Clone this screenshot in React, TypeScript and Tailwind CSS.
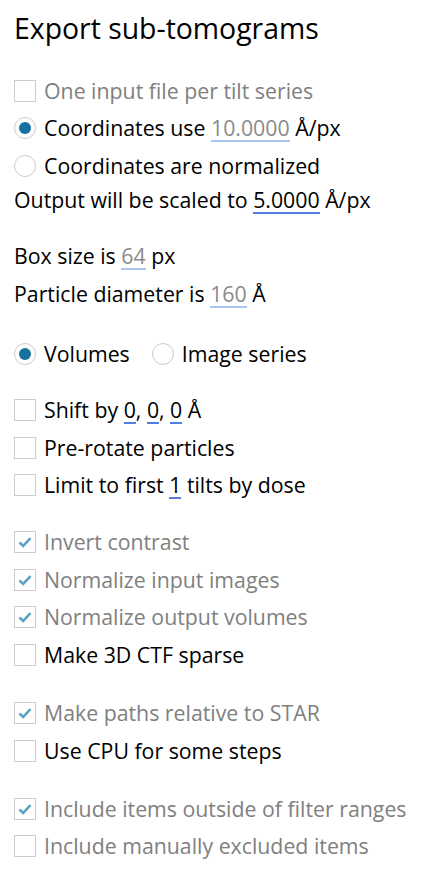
import React from "react";

function Box({ checked = false }: { checked?: boolean }) {
  return (
    <span className="flex h-[22px] w-[22px] shrink-0 items-center justify-center border border-[#cccccc] bg-white">
      {checked && (
        <svg width="16" height="16" viewBox="0 0 16 16">
          <path d="M2.5 8.5 L6.2 12 L13.5 4.2" fill="none" stroke="#5aa2c6" strokeWidth="2.6" />
        </svg>
      )}
    </span>
  );
}

function Radio({ checked = false }: { checked?: boolean }) {
  return (
    <span className="flex h-[22px] w-[22px] shrink-0 items-center justify-center rounded-full border border-[#cccccc] bg-white">
      {checked && <span className="h-[12px] w-[12px] rounded-full bg-[#17719f]" />}
    </span>
  );
}

// numeric field shown inline, underlined
function Val({ v, on = false }: { v: string; on?: boolean }) {
  return (
    <span
      className={
        on
          ? "inline-block border-b-2 border-[#4f80e0] leading-[25px] text-black"
          : "inline-block border-b-2 border-[#a9c3f4] leading-[25px] text-[#8a8a8a]"
      }
    >
      {v}
    </span>
  );
}

function Row({
  ctl,
  dim = false,
  children,
  cls = "",
}: {
  ctl?: React.ReactNode;
  dim?: boolean;
  children: React.ReactNode;
  cls?: string;
}) {
  return (
    <div className={`flex h-[37.5px] items-center gap-[8px] ${cls}`}>
      {ctl}
      <span className={dim ? "text-[#808080]" : "text-black"}>{children}</span>
    </div>
  );
}

export default function App() {
  return (
    <div
      className="min-h-screen bg-white px-[14px] text-[21.3px] leading-[28px]"
      style={{ fontFamily: '"Open Sans", "Noto Sans", sans-serif' }}
    >
      <h1 className="h-[60px] pt-[8px] text-[28.4px] leading-[40px] text-black">Export sub-tomograms</h1>

      <div className="pt-[12px]">
        <Row ctl={<Box />} dim>
          One input file per tilt series
        </Row>
        <Row ctl={<Radio checked />}>
          Coordinates use <Val v="10.0000" /> Å/px
        </Row>
        <Row ctl={<Radio />}>Coordinates are normalized</Row>
        <div className="flex h-[30px] items-center">
          <span>
            Output will be scaled to <Val v="5.0000" on /> Å/px
          </span>
        </div>

        <div className="mt-[23px]">
          <Row>
            Box size is <Val v="64" /> px
          </Row>
          <Row>
            Particle diameter is <Val v="160" /> Å
          </Row>
        </div>

        <div className="mt-[23px] flex h-[37.5px] items-center">
          <div className="flex items-center gap-[8px]">
            <Radio checked />
            <span>Volumes</span>
          </div>
          <div className="ml-[22px] flex items-center gap-[8px]">
            <Radio />
            <span>Image series</span>
          </div>
        </div>

        <div className="mt-[18.5px]">
          <Row ctl={<Box />}>
            Shift by <Val v="0" on />, <Val v="0" on />, <Val v="0" on /> Å
          </Row>
          <Row ctl={<Box />}>Pre-rotate particles</Row>
          <Row ctl={<Box />}>
            Limit to first <Val v="1" on /> tilts by dose
          </Row>
        </div>

        <div className="mt-[19.5px]">
          <Row ctl={<Box checked />} dim>
            Invert contrast
          </Row>
          <Row ctl={<Box checked />} dim>
            Normalize input images
          </Row>
          <Row ctl={<Box checked />} dim>
            Normalize output volumes
          </Row>
          <Row ctl={<Box />}>Make 3D CTF sparse</Row>
        </div>

        <div className="mt-[21px]">
          <Row ctl={<Box checked />} dim>
            Make paths relative to STAR
          </Row>
          <Row ctl={<Box />}>Use CPU for some steps</Row>
        </div>

        <div className="mt-[20.5px]">
          <Row ctl={<Box checked />} dim>
            Include items outside of filter ranges
          </Row>
          <Row ctl={<Box />} dim>
            Include manually excluded items
          </Row>
        </div>
      </div>
    </div>
  );
}
